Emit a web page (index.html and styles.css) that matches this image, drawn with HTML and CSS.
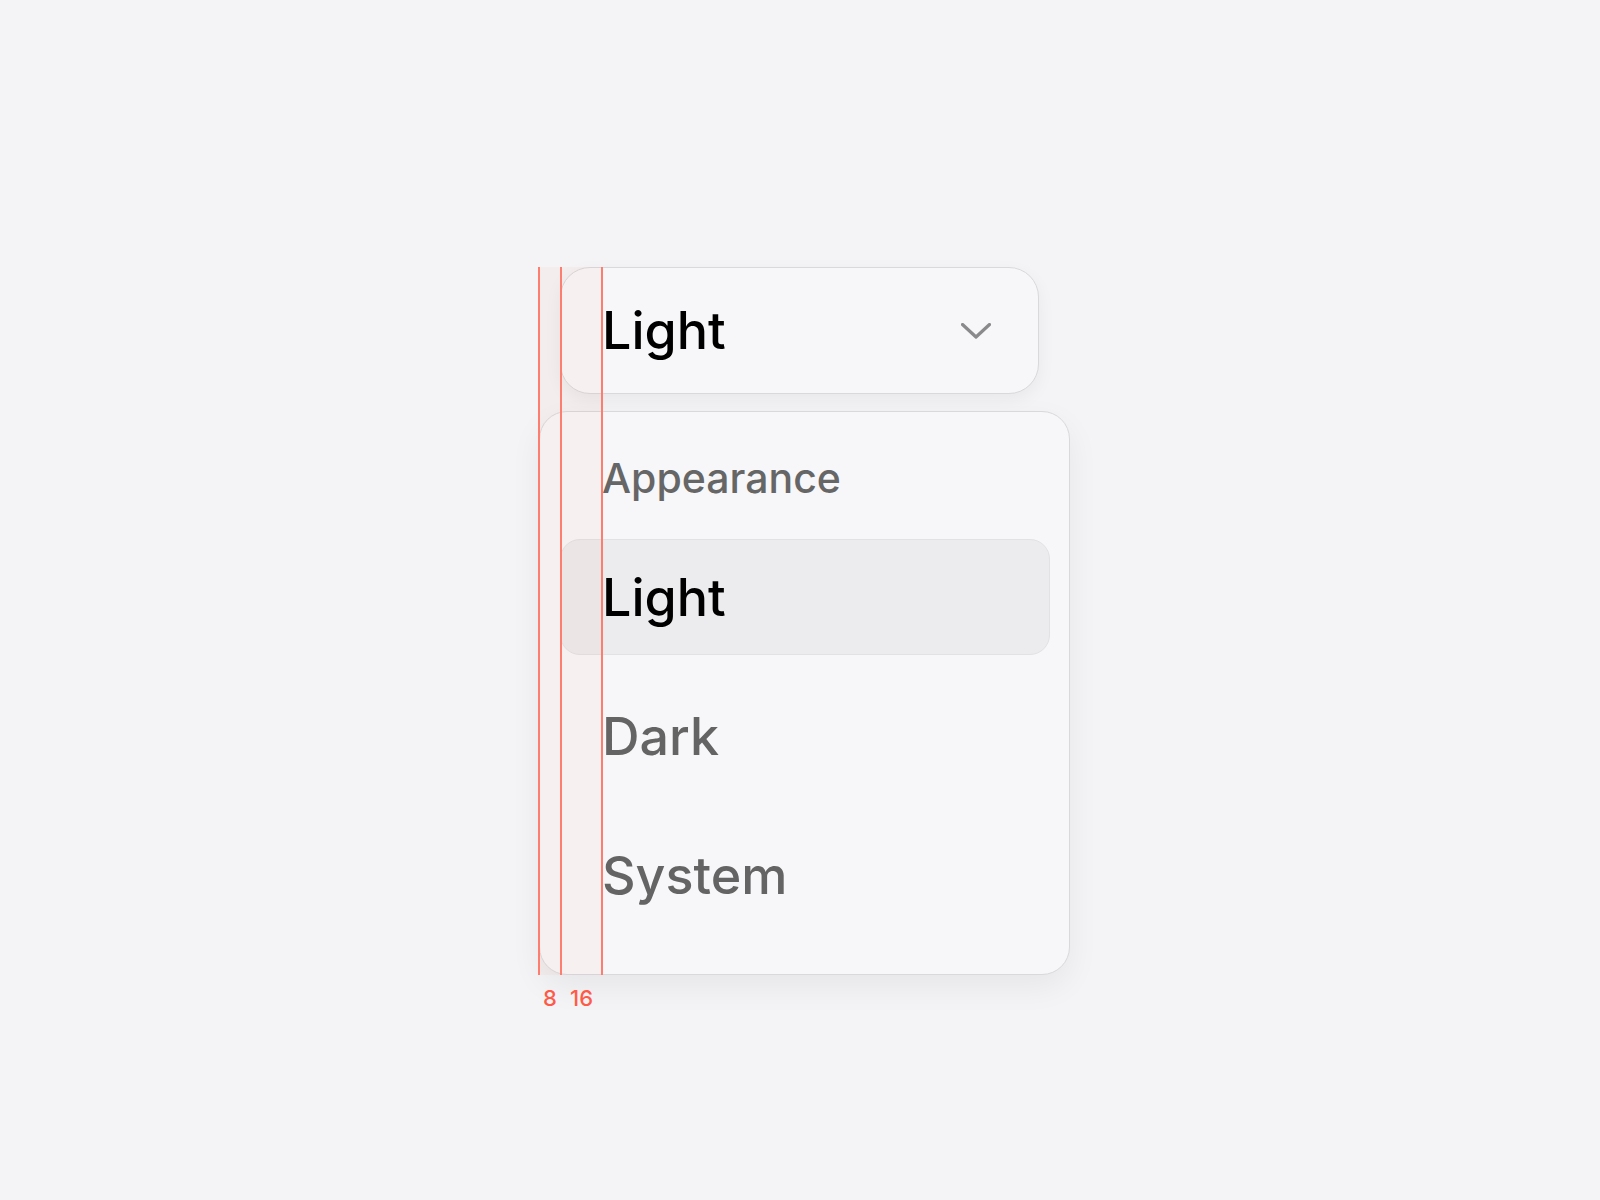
FILE: index.html
```html
<!DOCTYPE html>
<html lang="en">
<head>
<meta charset="utf-8">
<title>Select</title>
<link rel="stylesheet" href="styles.css">
</head>
<body>
<main class="stage">
  <div class="select">
    <button class="trigger" type="button">
      <span class="value">Light</span>
      <svg class="chevron" viewBox="0 0 30 16" width="30" height="16" aria-hidden="true">
        <path d="M1.5 1.5 L15 14 L28.5 1.5" fill="none" stroke="currentColor" stroke-width="3.2" stroke-linecap="round" stroke-linejoin="round"/>
      </svg>
    </button>
    <div class="menu" role="listbox">
      <div class="group-label">Appearance</div>
      <div class="item selected" role="option">Light</div>
      <div class="item" role="option">Dark</div>
      <div class="item" role="option">System</div>
    </div>
    <div class="guides" aria-hidden="true">
      <div class="band band-8"><span class="measure">8</span></div>
      <div class="band band-16"><span class="measure">16</span></div>
    </div>
  </div>
</main>
</body>
</html>
```

FILE: styles.css
```css
* {
  box-sizing: border-box;
}

html, body {
  margin: 0;
  padding: 0;
  background: #f4f4f6;
}

body {
  font-family: Inter, "Liberation Sans", sans-serif;
  width: 1600px;
  height: 1200px;
  overflow: hidden;
}

.stage {
  padding: 267px 0 0 539px;
}

.select {
  position: relative;
  width: 531px;
}

.trigger {
  display: flex;
  align-items: center;
  justify-content: space-between;
  width: 479px;
  height: 127px;
  margin-left: 21px;
  padding: 0 47px 0 41px;
  background: #f7f7f9;
  border: 1px solid #d9d9dc;
  border-radius: 30px;
  box-shadow: 0 6px 18px rgba(0, 0, 0, 0.05);
  font-family: inherit;
  cursor: pointer;
}

.value {
  font-size: 52px;
  font-weight: 500;
  line-height: 1;
  color: #000;
}

.chevron {
  display: block;
  color: #8a8a8c;
}

.menu {
  margin-top: 17px;
  width: 531px;
  padding: 20px 19px 41px 20px;
  background: #f7f7f9;
  border: 1px solid #d9d9dc;
  border-radius: 28px;
  box-shadow: 0 12px 32px rgba(0, 0, 0, 0.06);
  display: flex;
  flex-direction: column;
}

.group-label {
  height: 92px;
  margin-bottom: 15px;
  padding-left: 42px;
  display: flex;
  align-items: center;
  font-size: 41px;
  font-weight: 500;
  color: #666666;
}

.item {
  height: 116px;
  padding-left: 41px;
  display: flex;
  align-items: center;
  font-size: 52px;
  font-weight: 500;
  color: #646464;
  border: 1px solid transparent;
  border-radius: 20px;
}

.item + .item {
  margin-top: 23px;
}

.item.selected {
  background: #ececee;
  border-color: #e2e2e4;
  color: #000;
}

/* measurement overlay */
.guides {
  position: absolute;
  top: 0;
  left: -1px;
  height: 708px;
  display: flex;
  pointer-events: none;
}

.band {
  position: relative;
  height: 100%;
  background: rgba(255, 90, 70, 0.045);
  border-left: 2px solid #ff7d6e;
}

.band-8 {
  width: 22px;
}

.band-16 {
  width: 43px;
  border-right: 2px solid #ff7d6e;
}

.measure {
  position: absolute;
  top: 100%;
  left: 0;
  right: 0;
  margin-top: 10px;
  text-align: center;
  font-family: Inter, "Liberation Sans", sans-serif;
  font-size: 22px;
  font-weight: 500;
  color: #ff5a48;
}
```
